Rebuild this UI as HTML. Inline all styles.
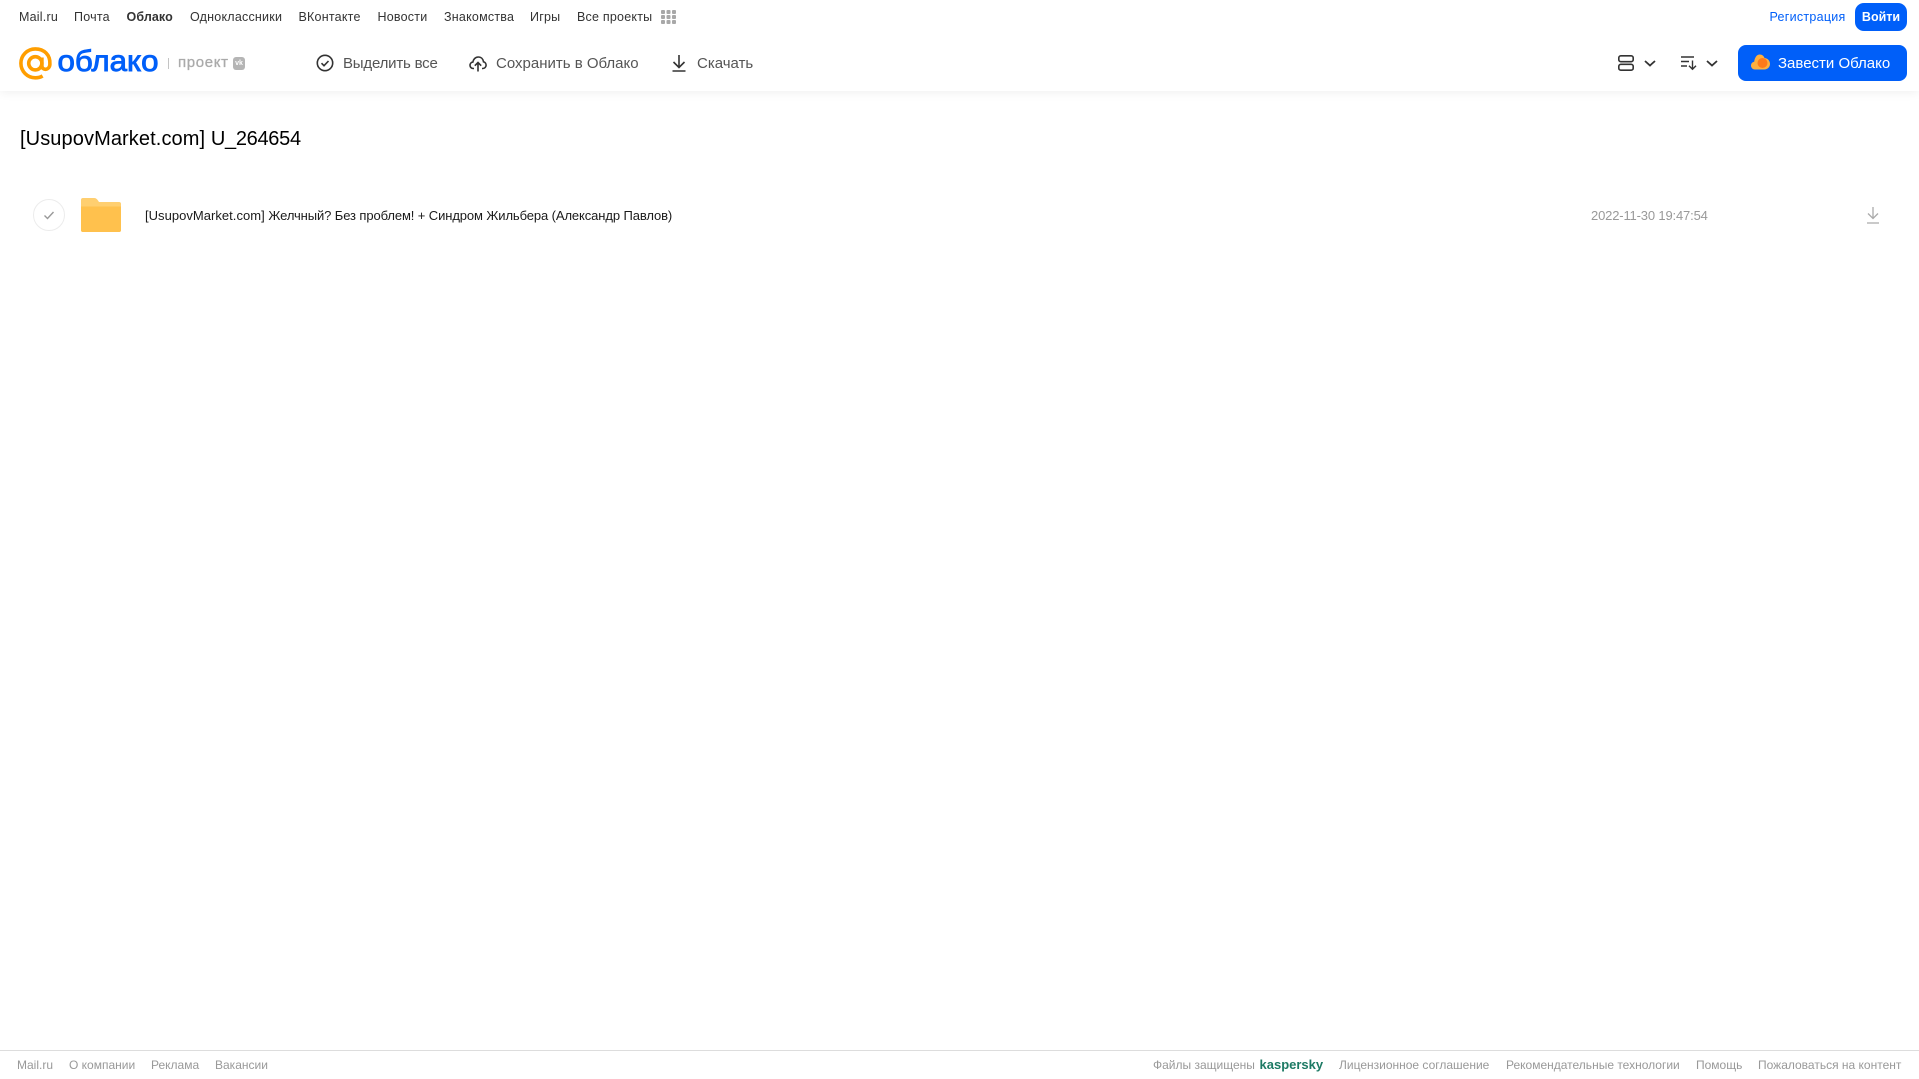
<!DOCTYPE html>
<html lang="ru"><head><meta charset="utf-8"><title>Облако</title>
<style>
html,body{margin:0;padding:0;background:#fff}
#p{position:relative;width:1919px;height:1079px;overflow:hidden;background:#fff;font-family:"Liberation Sans",sans-serif}
.t{position:absolute;white-space:nowrap;line-height:20px;height:20px}
.n{font-size:12.5px;color:#333;top:7px;letter-spacing:.22px}
.b{font-size:15px;color:#555;top:54px}
.f{font-size:12px;color:#999;top:1055px}
svg{position:absolute;overflow:visible}
</style></head><body><div id="p">
<div style="position:absolute;left:0;top:0;width:1919px;height:91px;background:#fff;box-shadow:0 1px 10px rgba(0,0,0,.07)"></div>

<span class="t n" style="left:19px">Mail.ru</span>
<span class="t n" style="left:74px">Почта</span>
<span class="t n" style="left:126.500px;font-weight:bold;letter-spacing:.1px">Облако</span>
<span class="t n" style="left:190px">Одноклассники</span>
<span class="t n" style="left:298.500px">ВКонтакте</span>
<span class="t n" style="left:377.500px">Новости</span>
<span class="t n" style="left:444px">Знакомства</span>
<span class="t n" style="left:530px">Игры</span>
<span class="t n" style="left:577px">Все проекты</span>
<svg style="left:661px;top:10px" width="15" height="14" fill="#a8a8a8"><rect x="0" y="0" width="4" height="4" rx="1"/><rect x="5.5" y="0" width="4" height="4" rx="1"/><rect x="11" y="0" width="4" height="4" rx="1"/><rect x="0" y="5" width="4" height="4" rx="1"/><rect x="5.5" y="5" width="4" height="4" rx="1"/><rect x="11" y="5" width="4" height="4" rx="1"/><rect x="0" y="10" width="4" height="4" rx="1"/><rect x="5.5" y="10" width="4" height="4" rx="1"/><rect x="11" y="10" width="4" height="4" rx="1"/></svg>

<span class="t n" style="left:1769.500px;color:#005ff9;letter-spacing:.27px">Регистрация</span>
<div style="position:absolute;left:1855px;top:3px;width:52px;height:28px;border-radius:9px;background:#005ff9;color:#fff;font-size:12.500px;font-weight:bold;line-height:28px;text-align:center">Войти</div>

<svg style="left:19px;top:47px" width="33" height="33" viewBox="0 0 33 33" fill="none" stroke="#ff9e00" stroke-width="3.6"><circle cx="16.3" cy="16.3" r="6.6"/><path d="M22.9 10.5v8.2c0 5 7.6 5 8-1.400C31.500 7.800 25 1.900 16.300 1.900 8.300 1.900 1.900 8.400 1.900 16.300c0 8.200 6.500 14.500 14.400 14.500 2.900 0 5-.5 7.300-1.900"/></svg>
<svg style="left:56px;top:44px" width="106" height="36"><text x="1.500" y="27" font-family="Liberation Sans" font-size="30" fill="#005ff9" stroke="#005ff9" stroke-width=".9" textLength="101" lengthAdjust="spacingAndGlyphs">облако</text></svg>
<div style="position:absolute;left:168px;top:58px;width:1px;height:11px;background:#c4c4c4"></div>
<span class="t" style="left:178px;top:53px;font-size:15px;color:#aaa;-webkit-text-stroke:.3px #aaa;letter-spacing:.65px">проект</span>
<div style="position:absolute;left:233px;top:57px;width:12px;height:13px;border-radius:3px;background:#b5b5b5;color:#fff;font-size:7px;font-weight:bold;line-height:13px;text-align:center">vk</div>

<svg style="left:316px;top:54px" width="18" height="18" viewBox="0 0 18 18" fill="none" stroke="#333" stroke-width="1.600"><circle cx="9" cy="9" r="7.700"/><path d="M5.500 9.200l2.500 2.500 4.500-4.700"/></svg>
<span class="t b" style="left:343px;letter-spacing:-.2px">Выделить все</span>
<svg style="left:469px;top:54px" width="18" height="18" viewBox="0 0 18 18" fill="none" stroke="#333" stroke-width="1.600"><path d="M5 14.500H4.200C2.300 14.500 1 13 1 11.300c0-1.700 1.200-3 2.800-3.200C4.300 5.300 6.400 3 9.300 3c2.800 0 4.800 2 5.200 4.800 1.500.3 2.600 1.700 2.600 3.300 0 1.900-1.400 3.400-3.200 3.400H13"/><path d="M9 17.500V9M5.800 11.700L9 8.500l3.200 3.200"/></svg>
<span class="t b" style="left:496px">Сохранить в Облако</span>
<svg style="left:671px;top:54px" width="16" height="18" viewBox="0 0 16 18" fill="none" stroke="#333" stroke-width="1.600"><path d="M8 1v12M2.500 8l5.500 5.500L13.500 8M1.500 17h13"/></svg>
<span class="t b" style="left:697px">Скачать</span>

<svg style="left:1618px;top:55px" width="16" height="16" viewBox="0 0 16 16" fill="none" stroke="#333" stroke-width="1.600"><rect x=".8" y=".8" width="14.400" height="5.900" rx="2"/><rect x=".8" y="9.300" width="14.400" height="5.900" rx="2"/></svg>
<svg style="left:1644px;top:60px" width="12" height="7" viewBox="0 0 12 7" fill="none" stroke="#333" stroke-width="1.800"><path d="M1 1l5 4.500L11 1"/></svg>
<svg style="left:1681px;top:55px" width="17" height="16" viewBox="0 0 17 16" fill="none" stroke="#333" stroke-width="1.400"><path d="M0 2h13M0 6.500h8M0 11h6M11.500 5.500V14M8 10.800l3.500 3.500 3.500-3.500"/></svg>
<svg style="left:1706px;top:60px" width="12" height="7" viewBox="0 0 12 7" fill="none" stroke="#333" stroke-width="1.800"><path d="M1 1l5 4.500L11 1"/></svg>

<div style="position:absolute;left:1738px;top:45px;width:169px;height:36px;border-radius:8px;background:#005ff9"></div>
<svg style="left:1751px;top:54px" width="19" height="16" viewBox="0 0 19 16"><path d="M4 15.500C1.800 15.500 0 13.800 0 11.500 0 9.500 1.400 8 3.200 7.700 3.800 3.500 5.700.5 8.800.5c2.400 0 4 1.500 4.700 3.500C16.700 4.300 19 6.700 19 9.900c0 3.200-2.400 5.600-5.600 5.600z" fill="#ffb040"/><circle cx="11.500" cy="9" r="5" fill="#ff7a1a"/></svg>
<span class="t" style="left:1778px;top:54px;font-size:15px;color:#fff">Завести Облако</span>

<span class="t" style="left:20px;top:127px;font-size:20px;line-height:24px;height:24px;color:#000"><span style="letter-spacing:.1px">[UsupovMarket.com] </span><span style="letter-spacing:-.3px">U_264654</span></span>

<div style="position:absolute;left:33px;top:199px;width:30px;height:30px;border:1px solid #ececec;border-radius:50%"></div>
<svg style="left:43px;top:210px" width="12" height="10" viewBox="0 0 12 10" fill="none" stroke="#999" stroke-width="1.400"><path d="M1.500 5.500l3 3 6-6.500"/></svg>
<svg style="left:81px;top:198px" width="40" height="34" viewBox="0 0 40 34"><path d="M2 0h11c2 0 3 1 4 2.500L18 4h20a2 2 0 0 1 2 2v26a2 2 0 0 1-2 2H2a2 2 0 0 1-2-2V2a2 2 0 0 1 2-2z" fill="#ffcf70"/><path d="M0 8.500h40V32a2 2 0 0 1-2 2H2a2 2 0 0 1-2-2z" fill="#ffc14d"/></svg>
<span class="t" style="left:145px;top:206px;font-size:13px;color:#1a1a1a"><span style="letter-spacing:.03px">[UsupovMarket.com] </span><span style="letter-spacing:-.105px">Желчный? Без проблем! + Синдром Жильбера (Александр Павлов)</span></span>
<span class="t" style="left:1591px;top:206px;font-size:13px;color:#999;letter-spacing:-.16px">2022-11-30 19:47:54</span>
<svg style="left:1866px;top:206px" width="14" height="18" viewBox="0 0 14 18" fill="none" stroke="#aaa" stroke-width="1.300"><path d="M7 1v11.500M2 7.500l5 5 5-5M1 17h12"/></svg>

<div style="position:absolute;left:0;top:1050px;width:1919px;height:1px;background:#ddd"></div>
<span class="t f" style="left:17px">Mail.ru</span>
<span class="t f" style="left:69px">О компании</span>
<span class="t f" style="left:151px">Реклама</span>
<span class="t f" style="left:215px">Вакансии</span>
<span class="t f" style="left:1153px">Файлы защищены</span>
<span class="t f" style="left:1259.500px;font-size:13px;font-weight:bold;color:#1d7a64">kaspersky</span>
<span class="t f" style="left:1339px">Лицензионное соглашение</span>
<span class="t f" style="left:1506px">Рекомендательные технологии</span>
<span class="t f" style="left:1696px">Помощь</span>
<span class="t f" style="left:1758px">Пожаловаться на контент</span>
</div></body></html>
